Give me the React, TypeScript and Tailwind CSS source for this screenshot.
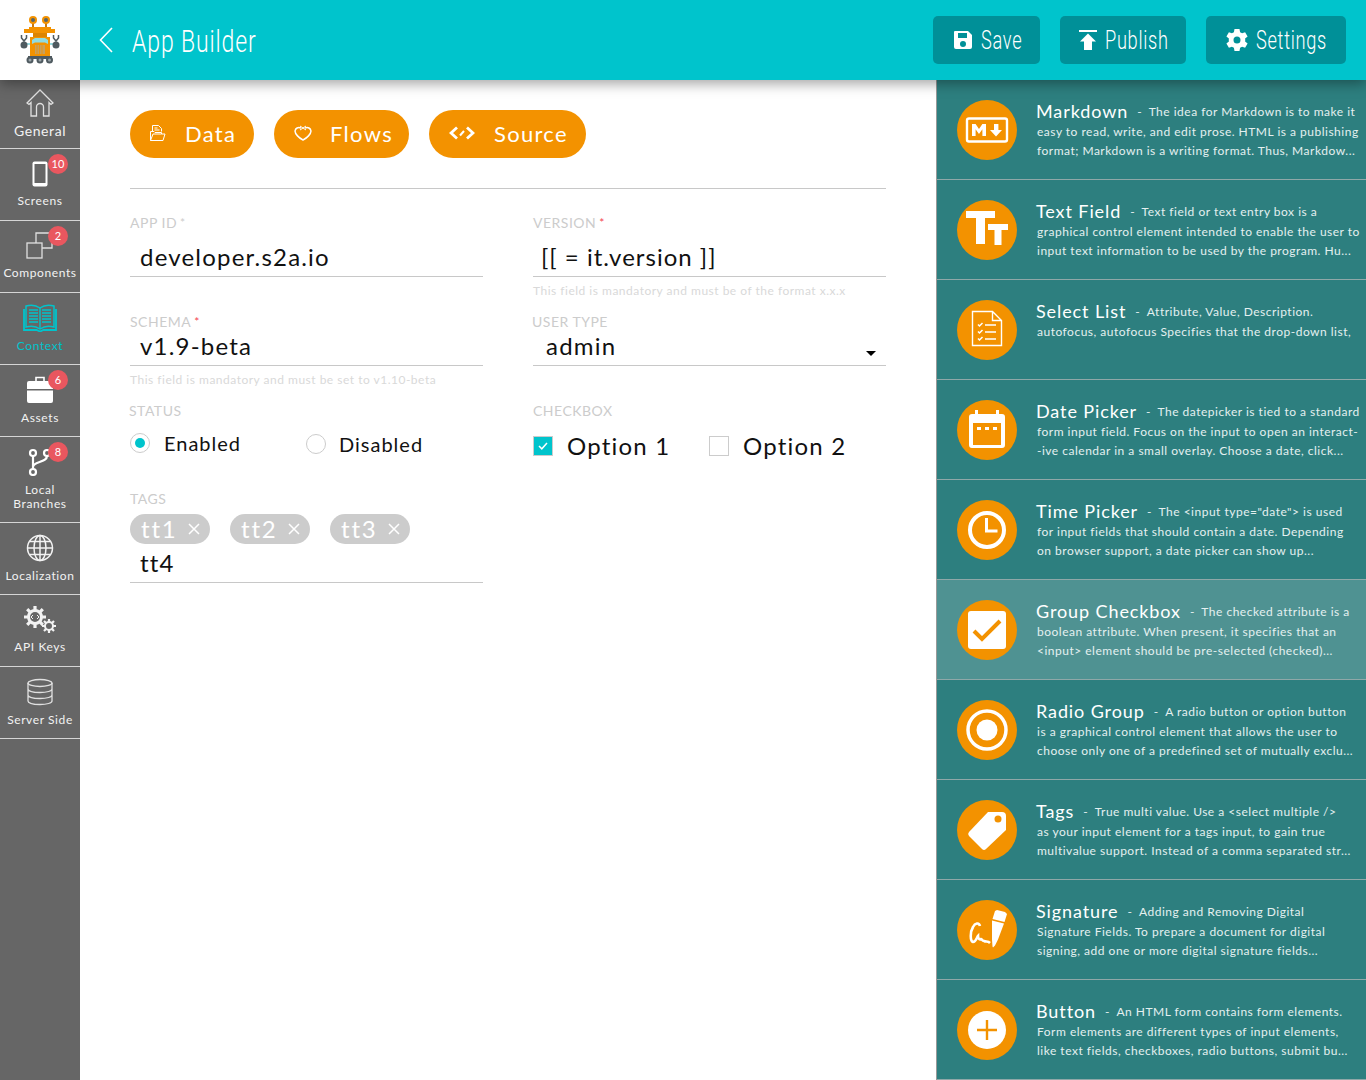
import type { ReactNode } from 'react'

const ROWS = [
  { title: 'Markdown', first: 'The idea for Markdown is to make it', lines: ['easy to read, write, and edit prose. HTML is a publishing', 'format; Markdown is a writing format. Thus, Markdow...'], icon: 'md' },
  { title: 'Text Field', first: 'Text field or text entry box is a', lines: ['graphical control element intended to enable the user to', 'input text information to be used by the program. Hu...'], icon: 'tt' },
  { title: 'Select List', first: 'Attribute, Value, Description.', lines: ['autofocus, autofocus Specifies that the drop-down list,'], icon: 'list' },
  { title: 'Date Picker', first: 'The datepicker is tied to a standard', lines: ['form input field. Focus on the input to open an interact-', '-ive calendar in a small overlay. Choose a date, click...'], icon: 'date' },
  { title: 'Time Picker', first: 'The <input type="date"> is used', lines: ['for input fields that should contain a date. Depending', 'on browser support, a date picker can show up...'], icon: 'time' },
  { title: 'Group Checkbox', first: 'The checked attribute is a', lines: ['boolean attribute. When present, it specifies that an', '<input> element should be pre-selected (checked)...'], icon: 'check', active: true },
  { title: 'Radio Group', first: 'A radio button or option button', lines: ['is a graphical control element that allows the user to', 'choose only one of a predefined set of mutually exclu...'], icon: 'radio' },
  { title: 'Tags', first: 'True multi value. Use a <select multiple />', lines: ['as your input element for a tags input, to gain true', 'multivalue support. Instead of a comma separated str...'], icon: 'tag' },
  { title: 'Signature', first: 'Adding and Removing Digital', lines: ['Signature Fields. To prepare a document for digital', 'signing, add one or more digital signature fields...'], icon: 'sign' },
  { title: 'Button', first: 'An HTML form contains form elements.', lines: ['Form elements are different types of input elements,', 'like text fields, checkboxes, radio buttons, submit bu...'], icon: 'plus' },
]

function RowIcon({ name }: { name: string }) {
  const o = '#f39200'
  return (
    <svg width="60" height="60" viewBox="0 0 60 60" className="shrink-0">
      <circle cx="30" cy="30" r="30" fill={o} />
      {name === 'md' && (
        <g>
          <rect x="10" y="18.500" width="40" height="23" rx="2" fill="none" stroke="#fff" strokeWidth="2.400" />
          <path d="M15 36V24h3.600l3.400 5 3.400-5H29v12h-3.600v-6.800L22 34l-3.400-4.800V36z M37 24h4.400v6H45l-6 6.600-6-6.600h4z" fill="#fff" />
        </g>
      )}
      {name === 'tt' && (
        <path d="M9 11h29v7h-10v26h-9V18H9z M31 24h20v6h-6.500v15h-7V30H31z" fill="#fff" />
      )}
      {name === 'list' && (
        <g fill="none" stroke="#fff">
          <path d="M15.500 11.500h20l9 9v25h-29z M35.500 11.500v9h9" strokeWidth="1.400" />
          <path d="M21 24.500l1.500 1.500 3-3 M21 31.500l1.500 1.500 3-3 M21 38.500l1.500 1.500 3-3 M28 25h11 M28 32h11 M28 39h11" strokeWidth="1.500" />
        </g>
      )}
      {name === 'date' && (
        <g>
          <path d="M12 17a3 3 0 0 1 3-3h3v-4h3v4h18v-4h3v4h3a3 3 0 0 1 3 3v28a3 3 0 0 1-3 3H15a3 3 0 0 1-3-3z" fill="#fff" />
          <rect x="16" y="23" width="28" height="22" fill={o} />
          <path d="M20 27h4v3h-4z M28 27h4v3h-4z M36 27h4v3h-4z" fill="#fff" />
        </g>
      )}
      {name === 'time' && (
        <g fill="none" stroke="#fff">
          <circle cx="30" cy="30" r="17" strokeWidth="4" />
          <path d="M29.500 18v13h11" strokeWidth="3" />
        </g>
      )}
      {name === 'check' && (
        <g>
          <rect x="11" y="11" width="38" height="38" rx="3" fill="#fff" />
          <path d="M17 31l8 8 18-18" fill="none" stroke={o} strokeWidth="4" />
        </g>
      )}
      {name === 'radio' && (
        <g>
          <circle cx="30" cy="30" r="19" fill="none" stroke="#fff" strokeWidth="3.500" />
          <circle cx="30" cy="30" r="10.500" fill="#fff" />
        </g>
      )}
      {name === 'tag' && (
        <g>
          <path d="M31 12h14a4 4 0 0 1 4 4v14L29 49a3 3 0 0 1-4 0L12 36a3 3 0 0 1 0-4z" fill="#fff" />
          <circle cx="41" cy="19" r="3.500" fill={o} />
        </g>
      )}
      {name === 'sign' && (
        <g>
          <path d="M23 26c-1-4-5-3-7 1-3 5-3 14 0 15 3 0 4-5 5-6 0 3 2 4 3 3 1 0 1 2 3 2 2 1 4 0 6 2" fill="none" stroke="#fff" strokeWidth="2.600" />
          <path d="M38 11l2-1 8 2 2 2-2.500 8-12-3z M35 20.500l12 3-6 16-3 6-2 2-.5-1-.5-7z" fill="#fff" />
        </g>
      )}
      {name === 'plus' && (
        <g>
          <circle cx="30" cy="30" r="19" fill="#fff" />
          <path d="M30 20v20 M20 30h20" stroke={o} strokeWidth="2.400" />
        </g>
      )}
    </svg>
  )
}

function Robot() {
  return (
    <svg width="80" height="80" viewBox="0 0 80 80">
      <path d="M33 22v7 M46 22v7" stroke="#c97a10" strokeWidth="2" />
      <circle cx="33" cy="20" r="4" fill="#f39200" /><circle cx="33" cy="20" r="2" fill="#56666e" />
      <circle cx="46" cy="20" r="4" fill="#f39200" /><circle cx="46" cy="20" r="2" fill="#56666e" />
      <path d="M29 27h22v2h4v4H24v-4h5z" fill="#f39200" />
      <rect x="33" y="33" width="14" height="4" fill="#dd8400" />
      <path d="M26 44h5 M49 44h6" stroke="#7bd0d8" strokeWidth="1.500" />
      <rect x="30" y="37" width="20" height="19" fill="#f39200" />
      <path d="M32 40l3-2h10l3 2v4l-3-1.500H35L32 44z" fill="#8fdbe2" />
      <rect x="35" y="45" width="10" height="9" fill="#c9a05c" />
      <path d="M37 45v9 M39.500 45v9 M42 45v9" stroke="#f39200" strokeWidth="0.800" />
      <circle cx="24" cy="45" r="3.500" fill="#4f5a60" /><circle cx="56" cy="45" r="3.500" fill="#4f5a60" />
      <path d="M21.500 35v3l2.500 3 2.500-3v-3 M53.500 35v3l2.500 3 2.500-3v-3" fill="none" stroke="#4f5a60" strokeWidth="1.500" />
      <rect x="28" y="56" width="24" height="3" fill="#4f5a60" />
      <circle cx="30" cy="60" r="3.500" fill="#4f5a60" /><circle cx="40" cy="60" r="3.500" fill="#4f5a60" /><circle cx="49.500" cy="60" r="3.500" fill="#4f5a60" />
      <circle cx="30" cy="60" r="1.500" fill="#9aa4a8" /><circle cx="40" cy="60" r="1.500" fill="#9aa4a8" /><circle cx="49.500" cy="60" r="1.500" fill="#9aa4a8" />
    </svg>
  )
}

const NAV: { label: string[]; badge?: string; icon: ReactNode; active?: boolean; tight?: boolean }[] = [
  {
    label: ['General'],
    icon: (
      <svg width="28" height="28" viewBox="0 0 28 28" fill="none" stroke="#e0e0e0" strokeWidth="1.300">
        <path d="M1 14 14 1l13 13-2 1.500-2-2V27h-5.500V18a3.500 3.500 0 0 0-7 0v9H5V13.500l-2 2z" />
      </svg>
    ),
  },
  {
    label: ['Screens'],
    badge: '10',
    tight: true,
    icon: (
      <svg width="28" height="28" viewBox="0 0 28 28">
        <rect x="6.500" y="1.500" width="15" height="25" rx="2" fill="#fff" />
        <rect x="8.500" y="4" width="11" height="19" fill="#666" />
      </svg>
    ),
  },
  {
    label: ['Components'],
    badge: '2',
    tight: true,
    icon: (
      <svg width="28" height="28" viewBox="0 0 28 28" fill="none" stroke="#e0e0e0" strokeWidth="1.300">
        <rect x="1" y="11" width="15" height="15" />
        <path d="M10 11V1h16v15H16" />
      </svg>
    ),
  },
  {
    label: ['Context'],
    active: true,
    icon: (
      <svg width="34" height="28" viewBox="0 0 34 28" fill="none" stroke="#00c4cc">
        <path d="M3 2c5-1.500 10-1 14 2 4-3 9-3.500 14-2v21c-5-1.500-10-1-14 2-4-3-9-3.500-14-2z" strokeWidth="1.500" />
        <path d="M17 4v21 M6 6h9 M6 9h9 M6 12h9 M6 15h9 M6 18h9 M19 6h9 M19 9h9 M19 12h9 M19 15h9 M19 18h9" strokeWidth="1.400" />
        <path d="M1 5v21h12.500l3.500 1.500 3.500-1.500H33V5" strokeWidth="1.800" />
      </svg>
    ),
  },
  {
    label: ['Assets'],
    badge: '6',
    icon: (
      <svg width="28" height="28" viewBox="0 0 28 28">
        <path d="M10 5V1.500h8V5" fill="none" stroke="#fff" strokeWidth="1.600" />
        <path d="M3 5h22a2 2 0 0 1 2 2v6H1V7a2 2 0 0 1 2-2z M1 14.500h26V25a2 2 0 0 1-2 2H3a2 2 0 0 1-2-2z" fill="#fff" />
      </svg>
    ),
  },
  {
    label: ['Local', 'Branches'],
    badge: '8',
    icon: (
      <svg width="28" height="28" viewBox="0 0 28 28" fill="none" stroke="#fff" strokeWidth="2.200">
        <circle cx="7" cy="5" r="3" />
        <circle cx="7" cy="24" r="3" />
        <circle cx="21" cy="5" r="3" />
        <path d="M7 8v13 M21 8c0 7-14 5-14 11" />
      </svg>
    ),
  },
  {
    label: ['Localization'],
    icon: (
      <svg width="28" height="28" viewBox="0 0 28 28" fill="none" stroke="#f2f2f2" strokeWidth="1.500">
        <circle cx="14" cy="14" r="12.500" />
        <ellipse cx="14" cy="14" rx="6" ry="12.500" />
        <path d="M14 1.500v25 M1.500 14h25 M3.500 7.500h21 M3.500 20.500h21" />
      </svg>
    ),
  },
  {
    label: ['API Keys'],
    tight: true,
    icon: (
      <svg width="32" height="28" viewBox="0 0 32 28" fill="none" stroke="#f2f2f2">
        <circle cx="11" cy="11" r="6.500" strokeWidth="3" />
        <path d="M11 0v5 M11 17v5 M0 11h5 M17 11h5 M3.200 3.200l3.400 3.400 M15.400 15.400l3.400 3.400 M3.200 18.800l3.400-3.400 M15.400 6.600l3.400-3.400" strokeWidth="3.200" />
        <path d="M9 9l-2 2 2 2 M13 9l2 2-2 2" strokeWidth="1" />
        <circle cx="25" cy="20" r="4" strokeWidth="2" />
        <path d="M25 13v3 M25 24v3 M18 20h3 M29 20h3 M20 15l2 2 M28 23l2 2 M20 25l2-2 M28 17l2-2" strokeWidth="2.200" />
      </svg>
    ),
  },
  {
    label: ['Server Side'],
    icon: (
      <svg width="28" height="28" viewBox="0 0 28 28" fill="none" stroke="#e0e0e0" strokeWidth="1.300">
        <ellipse cx="14" cy="5" rx="12" ry="3.500" />
        <path d="M2 5v18c0 2 5 3.500 12 3.500S26 25 26 23V5 M2 11c0 2 5 3.500 12 3.500S26 13 26 11 M2 17c0 2 5 3.500 12 3.500S26 19 26 17" />
      </svg>
    ),
  },
]

function NavItem({ item, index }: { item: (typeof NAV)[number]; index: number }) {
  const two = item.label.length > 1
  return (
    <div className={`relative flex flex-col items-center border-b border-[#d5d5d5] ${index === 0 ? 'h-[69px] pt-[9px]' : two ? 'h-[86px] pt-[11px]' : 'h-[72px] pt-[11px]'}`}>
      <div className="flex h-[28px] items-center justify-center">{item.icon}</div>
      <div className={`text-center leading-[14px] ${item.tight ? 'mt-[6px]' : 'mt-[7px]'} ${index === 0 ? 'text-[14px] tracking-[0.6px]' : 'text-[12px] tracking-[0.6px]'} ${item.active ? 'text-[#00c4cc]' : 'text-[#f2f2f2]'}`}>
        {item.label.map((l) => (
          <div key={l}>{l}</div>
        ))}
      </div>
      {item.badge && (
        <span className="absolute left-[48px] top-[5px] flex h-[20px] w-[20px] items-center justify-center rounded-full bg-[#e9575f] text-[11px] text-white">
          {item.badge}
        </span>
      )}
    </div>
  )
}

function TopButton({ icon, label, width, textWidth }: { icon: ReactNode; label: string; width: string; textWidth: string }) {
  return (
    <div className={`flex h-[48px] items-center justify-center gap-[8px] rounded-[5px] bg-[#009098] text-white ${width}`}>
      {icon}
      <span className={textWidth}>
        <span className="inline-block origin-left scale-x-[0.7] whitespace-nowrap font-['Roboto',sans-serif] text-[26px] font-light tracking-[1px]">{label}</span>
      </span>
    </div>
  )
}

function PillButton({ icon, label, width, pad }: { icon: ReactNode; label: string; width: string; pad: string }) {
  return (
    <div className={`flex h-[48px] items-center rounded-full bg-[#f39200] pb-[2px] text-[22px] tracking-[1.300px] text-white ${width} ${pad}`}>
      {icon}
      <span>{label}</span>
    </div>
  )
}

function Label({ text, star, shift }: { text: string; star?: 'gray' | 'red'; shift?: string }) {
  return (
    <div className={`h-[18px] text-[14px] leading-[18px] tracking-[0.5px] text-[#cccccc] ${shift ?? ''}`}>
      {text}
      {star && <span className={`ml-[3px] align-[1px] text-[12px] ${star === 'red' ? 'text-[#f4434f]' : 'text-[#cccccc]'}`}>*</span>}
    </div>
  )
}

function Value({ text, height, pad = 'pl-[10px]', track = 'tracking-[1.200px]' }: { text: string; height: string; pad?: string; track?: string }) {
  return (
    <div className={`flex items-center border-b border-[#c8c8c8] text-[24px] text-[#111] ${track} ${height} ${pad}`}>{text}</div>
  )
}

function Help({ text }: { text: string }) {
  return <div className="mt-[6px] text-[12px] leading-[16px] tracking-[0.5px] text-[#d9d9d9]">{text}</div>
}

function Chip({ text }: { text: string }) {
  return (
    <div className="flex h-[30px] w-[80px] items-center rounded-full bg-[#cccccc] pl-[11px] text-[24px] tracking-[1.800px] text-white">
      <span className="w-[47px]">{text}</span>
      <svg width="12" height="12" viewBox="0 0 12 12" stroke="#fff" strokeWidth="1.500">
        <path d="M1 1l10 10M11 1 1 11" />
      </svg>
    </div>
  )
}

export default function App() {
  return (
    <div className="flex h-[1080px] w-[1366px] flex-col overflow-hidden bg-white font-['Lato',sans-serif]">
      {/* Top bar */}
      <header className="relative z-10 flex h-[80px] shrink-0 bg-[#00c4cc] shadow-[0_4px_12px_rgba(0,0,0,0.35)]">
        <div className="w-[80px] bg-white">
          <Robot />
        </div>
        <svg width="14" height="26" viewBox="0 0 14 26" fill="none" stroke="#fff" strokeWidth="1.600" className="ml-[19px] mt-[27px]">
          <path d="M13 1 1.500 13 13 25" />
        </svg>
        <div className="ml-[19px] mt-[21px] flex-1">
          <span className="inline-block origin-left scale-x-[0.72] whitespace-nowrap font-['Roboto',sans-serif] text-[32px] font-light leading-[40px] tracking-[1.200px] text-white">App Builder</span>
        </div>
        <div className="mr-[20px] mt-[16px] flex gap-[20px]">
          <TopButton
            width="w-[107px]"
            textWidth="w-[40px]"
            label="Save"
            icon={
              <svg width="20" height="20" viewBox="0 0 20 20" fill="#fff">
                <path fillRule="evenodd" d="M2 1h13l4 4v12a2 2 0 0 1-2 2H3a2 2 0 0 1-2-2V2a1 1 0 0 1 1-1zm3 2v5h9V3zm5 8a3 3 0 1 0 0 6 3 3 0 0 0 0-6z" />
              </svg>
            }
          />
          <TopButton
            width="w-[126px]"
            textWidth="w-[62px]"
            label="Publish"
            icon={
              <svg width="18" height="20" viewBox="0 0 18 20" fill="#fff">
                <path d="M0 0h18v2H0z M9 3.500l8 8h-4V20H5v-8.500H1z" />
              </svg>
            }
          />
          <TopButton
            width="w-[140px]"
            textWidth="w-[71px]"
            label="Settings"
            icon={
              <svg width="22" height="22" viewBox="0 0 22 22" fill="#fff">
                <path fillRule="evenodd" d="M8.500 0h5l.6 3.200a8 8 0 0 1 2 1.100l3-1.100 2.500 4.300-2.500 2a8 8 0 0 1 0 3l2.500 2-2.500 4.300-3-1.100a8 8 0 0 1-2 1.100L13.500 22h-5l-.6-3.200a8 8 0 0 1-2-1.100l-3 1.100L.4 14.500l2.500-2a8 8 0 0 1 0-3L.4 7.500l2.500-4.300 3 1.100a8 8 0 0 1 2-1.100zM11 7.500a3.500 3.500 0 1 0 0 7 3.500 3.500 0 0 0 0-7z" />
              </svg>
            }
          />
        </div>
      </header>

      <div className="flex min-h-0 flex-1">
        {/* Sidebar */}
        <nav className="w-[80px] shrink-0 bg-[#666666]">
          {NAV.map((item, i) => (
            <NavItem key={item.label[0]} item={item} index={i} />
          ))}
        </nav>

        {/* Form */}
        <main className="w-[856px] shrink-0 pl-[50px] pr-[50px] pt-[30px]">
          <div className="flex gap-[20px]">
            <PillButton
              width="w-[124px]"
              pad="pl-[20px] gap-[19px]"
              label="Data"
              icon={
                <svg width="16" height="16" viewBox="0 0 16 16" fill="none" stroke="#fff" strokeWidth="1">
                  <path d="M2.500 6V.5h6l3 3v3 M4.500 3h3 M4.500 5h5 M.5 15.500V6.500h3.500l1 1h6.500v1.500h3.500l-2 6.500z M.5 15.500l2.500-6.500h8.500" />
                </svg>
              }
            />
            <PillButton
              width="w-[135px]"
              pad="pl-[19px] gap-[17px]"
              label="Flows"
              icon={
                <svg width="20" height="16" viewBox="0 0 20 16" fill="none" stroke="#fff" strokeWidth="1.500">
                  <path d="M8 3C5 2 2.500 3 2 6c0 3 4 7 8 9 4-2 8-6 8-9-.5-3-3-4-6-3" />
                  <path d="M7 1l3 2-3 2 M13 1l-3 2 3 2" strokeWidth="1" />
                </svg>
              }
            />
            <PillButton
              width="w-[157px]"
              pad="pl-[20px] gap-[19px]"
              label="Source"
              icon={
                <svg width="26" height="16" viewBox="0 0 26 16" fill="none" stroke="#fff">
                  <path d="M8 2.500 2 8l6 5.500 M18 2.500 24 8l-6 5.500" strokeWidth="2.800" />
                  <path d="M15 6l-4 4.500" strokeWidth="2" />
                </svg>
              }
            />
          </div>

          <div className="mt-[30px] border-t border-[#c8c8c8] pt-[25px]">
            <div className="grid grid-cols-[353px_353px] grid-rows-[99px_89px_88px_auto] gap-x-[50px]">
              <div>
                <Label text="APP ID" star="gray" />
                <Value text="developer.s2a.io" height="h-[45px] pt-[6px]" />
              </div>
              <div>
                <Label text="VERSION" star="red" />
                <Value text="[[ = it.version ]]" height="h-[45px] pt-[6px]" pad="pl-[8px]" track="tracking-[1px]" />
                <Help text="This field is mandatory and must be of the format x.x.x" />
              </div>
              <div>
                <Label text="SCHEMA" star="red" />
                <Value text="v1.9-beta" height="h-[35px] pb-[4px]" />
                <Help text="This field is mandatory and must be set to v1.10-beta" />
              </div>
              <div>
                <Label text="USER TYPE" shift="-ml-px" />
                <div className="relative">
                  <Value text="admin" height="h-[35px] pb-[4px]" pad="pl-[13px]" />
                  <span className="absolute left-[333px] top-[20px] h-0 w-0 border-x-[5px] border-t-[5px] border-x-transparent border-t-black" />
                </div>
              </div>
              <div>
                <Label text="STATUS" shift="-ml-px" />
                <div className="mt-[7px] flex text-[20px] tracking-[1px] text-[#111]">
                  <div className="flex w-[176px] items-center gap-[14px]">
                    <span className="flex h-[20px] w-[20px] items-center justify-center rounded-full border border-[#cccccc]">
                      <span className="h-[10px] w-[10px] rounded-full bg-[#00c4cc]" />
                    </span>
                    <span>Enabled</span>
                  </div>
                  <div className="mt-[2px] flex items-center gap-[13px]">
                    <span className="h-[20px] w-[20px] rounded-full border border-[#cccccc]" />
                    <span>Disabled</span>
                  </div>
                </div>
              </div>
              <div>
                <Label text="CHECKBOX" />
                <div className="mt-[8px] flex text-[24px] tracking-[1.200px] text-[#111]">
                  <div className="flex w-[176px] items-center gap-[14px]">
                    <span className="flex h-[20px] w-[20px] items-center justify-center border border-[#cccccc] bg-[#00c4cc]">
                      <svg width="10" height="8" viewBox="0 0 10 8" fill="none" stroke="#fff" strokeWidth="1.500">
                        <path d="M1 4l2.800 2.800L9 1" />
                      </svg>
                    </span>
                    <span>Option 1</span>
                  </div>
                  <div className="flex items-center gap-[14px]">
                    <span className="h-[20px] w-[20px] border border-[#cccccc]" />
                    <span>Option 2</span>
                  </div>
                </div>
              </div>
              <div>
                <Label text="TAGS" />
                <div className="mt-[6px] flex gap-[20px]">
                  <Chip text="tt1" />
                  <Chip text="tt2" />
                  <Chip text="tt3" />
                </div>
                <Value text="tt4" height="h-[39px]" />
              </div>
            </div>
          </div>
        </main>

        {/* Component palette */}
        <aside className="flex-1 border-l border-[#999] bg-[#2d7f7f]">
          {ROWS.map((r) => (
            <div key={r.title} className={`flex h-[100px] border-b border-[#8fa8a8] pl-[20px] pt-[20px] text-[#e4f0f0] ${r.active ? 'bg-[#4f9292]' : ''}`}>
              <RowIcon name={r.icon} />
              <div className="ml-[19px] whitespace-nowrap">
                <div className="flex h-[22px] items-center">
                  <span className="text-[18px] tracking-[0.9px] text-white">{r.title}</span>
                  <span className="ml-[9px] mt-[2px] text-[12px]">-</span>
                  <span className="ml-[7px] mt-[2px] text-[12px] tracking-[0.5px]">{r.first}</span>
                </div>
                {r.lines.map((l) => (
                  <div key={l} className="pl-px text-[12px] leading-[19px] tracking-[0.5px]">{l}</div>
                ))}
              </div>
            </div>
          ))}
        </aside>
      </div>
    </div>
  )
}
